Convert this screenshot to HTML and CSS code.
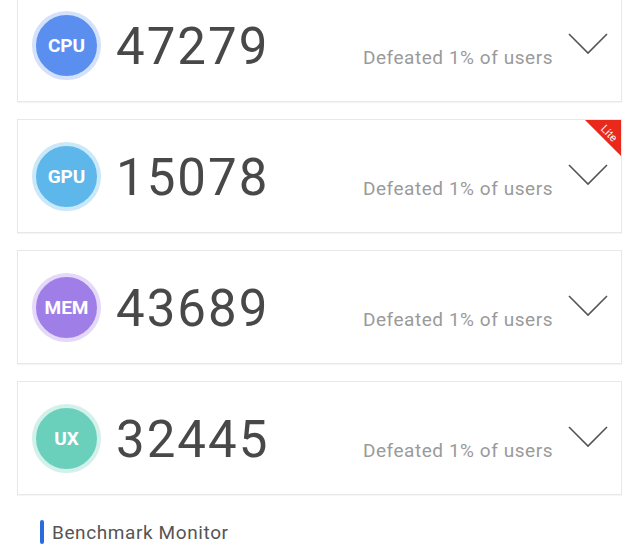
FILE: index.html
```html
<!DOCTYPE html>
<html>
<head>
<meta charset="utf-8">
<link rel="stylesheet" href="styles.css">
</head>
<body>
<div class="list">
  <div class="card card-first">
    <div class="badge badge-cpu">CPU</div>
    <div class="info">
      <span class="score">47279</span>
      <span class="meta">Defeated 1% of users</span>
    </div>
    <svg class="chev" width="40" height="22" viewBox="0 0 40 22"><path d="M1 1 L20 20 L39 1" fill="none" stroke="#555" stroke-width="1.6"/></svg>
  </div>
  <div class="card">
    <div class="ribbon"><span class="ribbon-text">Lite</span></div>
    <div class="badge badge-gpu">GPU</div>
    <div class="info">
      <span class="score">15078</span>
      <span class="meta">Defeated 1% of users</span>
    </div>
    <svg class="chev" width="40" height="22" viewBox="0 0 40 22"><path d="M1 1 L20 20 L39 1" fill="none" stroke="#555" stroke-width="1.6"/></svg>
  </div>
  <div class="card">
    <div class="badge badge-mem">MEM</div>
    <div class="info">
      <span class="score">43689</span>
      <span class="meta">Defeated 1% of users</span>
    </div>
    <svg class="chev" width="40" height="22" viewBox="0 0 40 22"><path d="M1 1 L20 20 L39 1" fill="none" stroke="#555" stroke-width="1.6"/></svg>
  </div>
  <div class="card">
    <div class="badge badge-ux">UX</div>
    <div class="info">
      <span class="score">32445</span>
      <span class="meta">Defeated 1% of users</span>
    </div>
    <svg class="chev" width="40" height="22" viewBox="0 0 40 22"><path d="M1 1 L20 20 L39 1" fill="none" stroke="#555" stroke-width="1.6"/></svg>
  </div>
</div>
<div class="section-title">
  <span class="bar"></span>
  <span class="section-text">Benchmark Monitor</span>
</div>
</body>
</html>
```

FILE: styles.css
```css
html, body {
  margin: 0;
  padding: 0;
  background: #ffffff;
  font-family: Roboto, "Noto Sans", sans-serif;
}
.list {
  display: flex;
  flex-direction: column;
  gap: 17px;
  padding: 0 18px 0 17px;
  margin-top: -12px;
}
.card {
  position: relative;
  box-sizing: border-box;
  height: 114px;
  border: 1px solid #e8e8e8;
  box-shadow: 0 1px 1px rgba(0,0,0,0.04);
  background: #fff;
  display: flex;
  align-items: center;
  padding: 0 13px 0 14px;
  overflow: hidden;
}
.badge {
  flex: none;
  box-sizing: border-box;
  width: 69px;
  height: 69px;
  border-radius: 50%;
  border: 4px solid;
  display: flex;
  align-items: center;
  justify-content: center;
  color: #fff;
  font-weight: 700;
  font-size: 19px;
}
.badge-cpu { background: #5a8ff0; border-color: #d3e2fa; }
.badge-gpu { background: #5db7ea; border-color: #cbe8f8; }
.badge-mem { background: #a07ee8; border-color: #e4d9f8; }
.badge-ux  { background: #6ad0bb; border-color: #d3f1ea; }
.info {
  flex: 1;
  display: flex;
  align-items: baseline;
  justify-content: space-between;
  margin-left: 15px;
  padding-top: 2px;
}
.score {
  font-size: 51px;
  letter-spacing: 2px;
  color: #484848;
  line-height: 1;
}
.meta {
  font-size: 19px;
  letter-spacing: 0.55px;
  color: #9a9a9a;
  margin-right: 15px;
}
.chev {
  flex: none;
  display: block;
  margin-bottom: 2px;
}
.ribbon {
  position: absolute;
  top: 0;
  right: 0;
  width: 36px;
  height: 36px;
  background: #e8291c;
  clip-path: polygon(0 0, 100% 0, 100% 100%);
}
.ribbon-text {
  position: absolute;
  top: 7px;
  right: -4px;
  width: 32px;
  text-align: center;
  color: #fff;
  font-size: 11px;
  transform: rotate(45deg);
}
.section-title {
  display: flex;
  align-items: center;
  gap: 8px;
  padding-left: 40px;
  margin-top: 25px;
}
.bar {
  width: 4px;
  height: 24px;
  border-radius: 2px;
  background: #2a6bdb;
}
.section-text {
  font-size: 19px;
  letter-spacing: 0.6px;
  color: #555;
}
```
